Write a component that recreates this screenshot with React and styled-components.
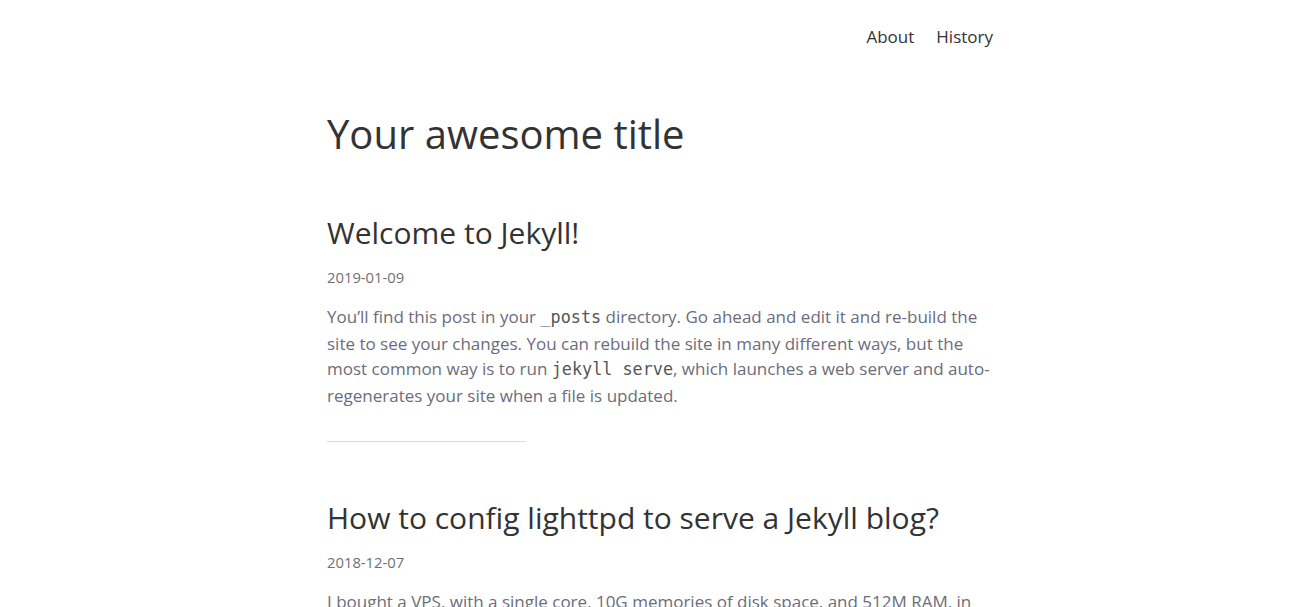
import React from "react";
import styled, { createGlobalStyle } from "styled-components";

const GlobalStyle = createGlobalStyle`
  body {
    margin: 0;
    background: #fff;
    font-family: "Open Sans", "Liberation Sans", sans-serif;
    color: #333;
  }
`;

const Page = styled.div`
  width: 666px;
  margin: 0 auto;
  padding: 25px 0 0 4px;
`;

const Nav = styled.nav`
  display: flex;
  justify-content: flex-end;
  gap: 22px;
`;

const NavLink = styled.a`
  font-size: 17px;
  line-height: 24px;
  color: #333;
  text-decoration: none;
`;

const SiteTitle = styled.h1`
  margin: 58px 0 50px;
  font-size: 40px;
  font-weight: 400;
  line-height: 54px;
  color: #333;
`;

const Post = styled.article`
  margin-bottom: 54px;
`;

const PostTitle = styled.h2`
  margin: 0;
  font-size: 30px;
  font-weight: 400;
  line-height: 44px;
  color: #333;
`;

const PostDate = styled.div`
  margin-top: 12px;
  font-size: 14.8px;
  line-height: 20px;
  color: #707070;
`;

const PostBody = styled.p`
  margin: 17px 0 0;
  font-size: 17px;
  line-height: 25.7px;
  color: #6c6c7c;
`;

const Code = styled.code`
  font-family: "DejaVu Sans Mono", monospace;
  font-size: 16.8px;
  color: #555;
`;

const Divider = styled.hr`
  width: 199px;
  margin: 32px 0 0;
  border: 0;
  border-top: 1px solid #ddd;
`;

const posts = [
  {
    title: "Welcome to Jekyll!",
    date: "2019-01-09",
    body: (
      <>
        You’ll find this post in your <Code>_posts</Code> directory. Go ahead and edit it and re-build the
        site to see your changes. You can rebuild the site in many different ways, but the most common
        way is to run <Code>jekyll serve</Code>, which launches a web server and auto-regenerates your
        site when a file is updated.
      </>
    ),
  },
  {
    title: "How to config lighttpd to serve a Jekyll blog?",
    date: "2018-12-07",
    body: (
      <>
        I bought a VPS, with a single core, 10G memories of disk space, and 512M RAM, in order to host
        this blog and some other small projects of mine.
      </>
    ),
  },
];

const App = () => {
  return (
    <>
      <GlobalStyle />
      <Page>
        <Nav>
          <NavLink href="#">About</NavLink>
          <NavLink href="#">History</NavLink>
        </Nav>
        <SiteTitle>Your awesome title</SiteTitle>
        {posts.map((post, index) => (
          <Post key={index}>
            <PostTitle>{post.title}</PostTitle>
            <PostDate>{post.date}</PostDate>
            <PostBody>{post.body}</PostBody>
            {index < posts.length - 1 && <Divider />}
          </Post>
        ))}
      </Page>
    </>
  );
};

export default App;
